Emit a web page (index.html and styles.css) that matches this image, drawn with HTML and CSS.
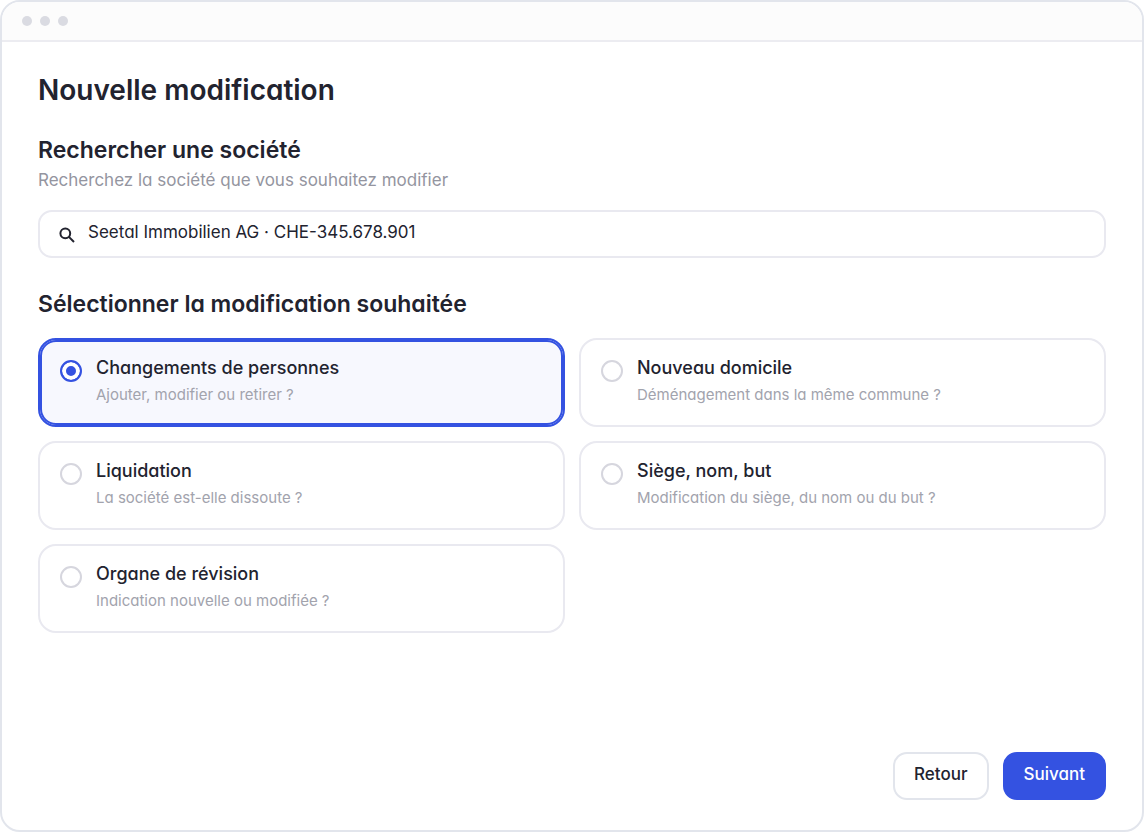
FILE: index.html
```html
<!DOCTYPE html>
<html lang="fr">
  <head>
    <meta charset="UTF-8" />
    <meta name="viewport" content="width=device-width, initial-scale=1.0" />
    <title>Nouvelle modification</title>
    <link rel="stylesheet" href="styles.css">
  </head>
  <body>
    <div class="window">
      <div class="window-bar">
        <span class="dot"></span>
        <span class="dot"></span>
        <span class="dot"></span>
      </div>
      <form class="content" onsubmit="return false">
        <h1>Nouvelle modification</h1>

        <h2><label for="company">Rechercher une société</label></h2>
        <p class="hint">Recherchez la société que vous souhaitez modifier</p>
        <div class="search">
          <svg class="search-icon" viewBox="0 0 16 16" aria-hidden="true">
            <circle cx="6.3" cy="6.3" r="4.9" />
            <path d="M9.9 9.9L15 15" />
          </svg>
          <input type="text" id="company" name="company" value="Seetal Immobilien AG · CHE-345.678.901" />
        </div>

        <h2>Sélectionner la modification souhaitée</h2>
        <div class="options">
          <label class="option selected">
            <input type="radio" name="change" value="personnes" checked />
            <span class="option-text">
              <span class="option-title">Changements de personnes</span>
              <span class="option-desc">Ajouter, modifier ou retirer ?</span>
            </span>
          </label>
          <label class="option">
            <input type="radio" name="change" value="domicile" />
            <span class="option-text">
              <span class="option-title">Nouveau domicile</span>
              <span class="option-desc">Déménagement dans la même commune ?</span>
            </span>
          </label>
          <label class="option">
            <input type="radio" name="change" value="liquidation" />
            <span class="option-text">
              <span class="option-title">Liquidation</span>
              <span class="option-desc">La société est-elle dissoute ?</span>
            </span>
          </label>
          <label class="option">
            <input type="radio" name="change" value="siege" />
            <span class="option-text">
              <span class="option-title">Siège, nom, but</span>
              <span class="option-desc">Modification du siège, du nom ou du but ?</span>
            </span>
          </label>
          <label class="option">
            <input type="radio" name="change" value="revision" />
            <span class="option-text">
              <span class="option-title">Organe de révision</span>
              <span class="option-desc">Indication nouvelle ou modifiée ?</span>
            </span>
          </label>
        </div>

        <div class="actions">
          <button type="button" class="btn">Retour</button>
          <button type="submit" class="btn btn-primary">Suivant</button>
        </div>
      </form>
    </div>
  </body>
</html>
```
FILE: styles.css
```css
* {
  box-sizing: border-box;
}
body {
  margin: 0;
  background: #fff;
  color: #22232f;
  font-family: Inter, "Liberation Sans", sans-serif;
  font-feature-settings: "cv11";
}
h1,
h2,
p {
  margin: 0;
}
.window {
  display: flex;
  flex-direction: column;
  min-height: 100vh;
  border: 2px solid #e2e5ec;
  border-radius: 20px;
  overflow: hidden;
}
.window-bar {
  display: flex;
  align-items: center;
  gap: 8px;
  height: 40px;
  padding: 0 20px;
  background: #fcfcfc;
  border-bottom: 2px solid #ececf1;
}
.dot {
  width: 10px;
  height: 10px;
  border-radius: 50%;
  background: #dadbe2;
}
.content {
  flex: 1;
  display: flex;
  flex-direction: column;
  padding: 30px 36px;
}
h1 {
  font-size: 28px;
  line-height: 36px;
  font-weight: 600;
  margin-bottom: 26px;
}
h2 {
  font-size: 23px;
  line-height: 32px;
  font-weight: 600;
}
.hint {
  font-size: 17px;
  line-height: 28px;
  color: #9495a0;
  margin-bottom: 16px;
}
.search {
  display: flex;
  align-items: center;
  gap: 13px;
  height: 48px;
  padding: 0 19px;
  margin-bottom: 30px;
  border: 2px solid #e9e9f0;
  border-radius: 14px;
}
.search-icon {
  width: 16px;
  height: 16px;
  margin-top: 2px;
  fill: none;
  stroke: #22232f;
  stroke-width: 2;
}
.search input {
  flex: 1;
  height: 100%;
  padding: 0 0 4px;
  border: 0;
  outline: 0;
  background: none;
  color: inherit;
  font: inherit;
  font-feature-settings: inherit;
  font-size: 17px;
}
.options {
  display: grid;
  grid-template-columns: 1fr 1fr;
  gap: 14px;
  margin-top: 18px;
}
.option {
  display: flex;
  gap: 14px;
  padding: 14px 20px 16px;
  border: 2px solid #e9e9f0;
  border-radius: 18px;
  cursor: pointer;
}
.option.selected {
  background: #f7f8fe;
  border-color: #3452e1;
  box-shadow: inset 0 0 0 2px #3452e1;
}
.option input {
  appearance: none;
  flex: none;
  width: 22px;
  height: 22px;
  margin: 6px 0 0;
  border: 2px solid #d6d6de;
  border-radius: 50%;
  background: #fff;
}
.option input:checked {
  border-color: #3452e1;
  background: #3452e1;
  box-shadow: inset 0 0 0 4px #fff;
}
.option-title,
.option-desc {
  display: block;
}
.option-title {
  font-size: 18px;
  line-height: 27px;
  font-weight: 500;
}
.option-desc {
  font-size: 15px;
  line-height: 28px;
  color: #a2a3ad;
}
.actions {
  display: flex;
  justify-content: flex-end;
  gap: 14px;
  margin-top: auto;
}
.btn {
  height: 48px;
  padding: 0 19px 4px;
  border: 2px solid #e2e5ec;
  border-radius: 14px;
  background: #fff;
  color: inherit;
  font: inherit;
  font-feature-settings: inherit;
  font-size: 17px;
  font-weight: 500;
  cursor: pointer;
}
.btn-primary {
  background: #3452e1;
  border-color: #3452e1;
  color: #fff;
}
```
